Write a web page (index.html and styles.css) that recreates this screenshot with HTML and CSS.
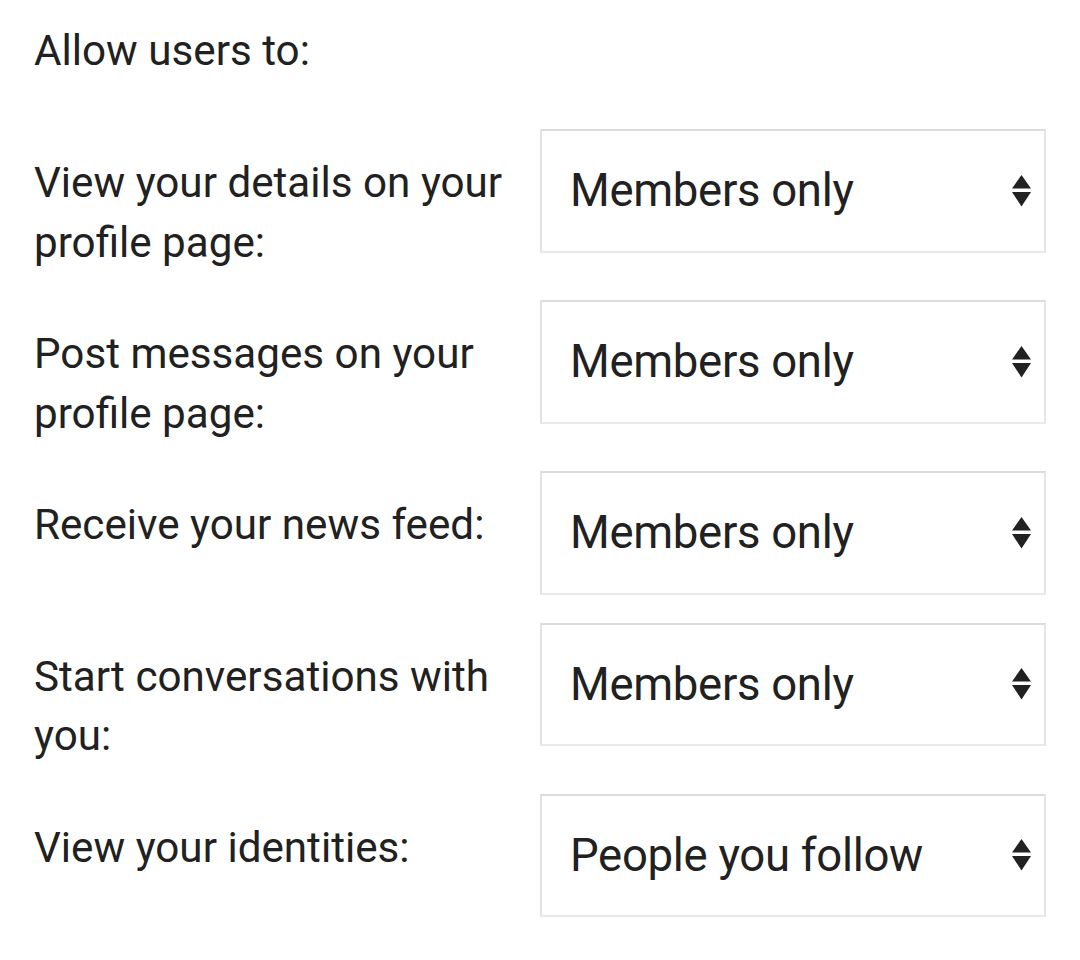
FILE: index.html
```html
<!DOCTYPE html>
<html lang="en">
<head>
<meta charset="utf-8">
<title>Privacy</title>
<link rel="stylesheet" href="styles.css">
</head>
<body>
<main class="privacy">
  <p class="intro">Allow users to:</p>

  <div class="row">
    <div class="label">View your details on your profile page:</div>
    <div class="select"><span class="value">Members only</span><svg class="arrows" viewBox="0 0 19 32" width="19" height="32"><path d="M0 13.5 L9.5 0 L19 13.5 Z"/><path d="M0 17 L19 17 L9.5 31.5 Z"/></svg></div>
  </div>

  <div class="row">
    <div class="label">Post messages on your profile page:</div>
    <div class="select"><span class="value">Members only</span><svg class="arrows" viewBox="0 0 19 32" width="19" height="32"><path d="M0 13.5 L9.5 0 L19 13.5 Z"/><path d="M0 17 L19 17 L9.5 31.5 Z"/></svg></div>
  </div>

  <div class="row">
    <div class="label">Receive your news feed:</div>
    <div class="select"><span class="value">Members only</span><svg class="arrows" viewBox="0 0 19 32" width="19" height="32"><path d="M0 13.5 L9.5 0 L19 13.5 Z"/><path d="M0 17 L19 17 L9.5 31.5 Z"/></svg></div>
  </div>

  <div class="row">
    <div class="label">Start conversations with you:</div>
    <div class="select"><span class="value">Members only</span><svg class="arrows" viewBox="0 0 19 32" width="19" height="32"><path d="M0 13.5 L9.5 0 L19 13.5 Z"/><path d="M0 17 L19 17 L9.5 31.5 Z"/></svg></div>
  </div>

  <div class="row">
    <div class="label">View your identities:</div>
    <div class="select"><span class="value">People you follow</span><svg class="arrows" viewBox="0 0 19 32" width="19" height="32"><path d="M0 13.5 L9.5 0 L19 13.5 Z"/><path d="M0 17 L19 17 L9.5 31.5 Z"/></svg></div>
  </div>
</main>
</body>
</html>
```

FILE: styles.css
```css
html, body {
  margin: 0;
  padding: 0;
  background: #ffffff;
}

body {
  font-family: Roboto, "Liberation Sans", Arial, sans-serif;
  color: #212121;
}

.privacy {
  padding: 21px 34px 0 34px;
}

.intro {
  margin: 0 0 48.6px 0;
  font-size: 42.2px;
  line-height: 59.4px;
}

.row {
  display: grid;
  grid-template-columns: 506px 1fr;
  align-items: start;
  margin-bottom: 28px;
}

.label {
  font-size: 42.2px;
  line-height: 59.4px;
  padding-top: 24.2px;
  padding-right: 20px;
}

.select {
  box-sizing: border-box;
  height: 123.5px;
  border: 2px solid #e2e2e2;
  border-top-color: #dcdcdc;
  border-bottom-color: #e9e9e9;
  border-right-color: #e6e6e6;
  display: flex;
  align-items: center;
  justify-content: space-between;
  padding: 0 13px 0 28px;
  font-size: 45.5px;
  letter-spacing: -0.3px;
  line-height: 1;
}

.value {
  white-space: nowrap;
}

.arrows {
  display: block;
  fill: #212121;
  flex: none;
}
```
